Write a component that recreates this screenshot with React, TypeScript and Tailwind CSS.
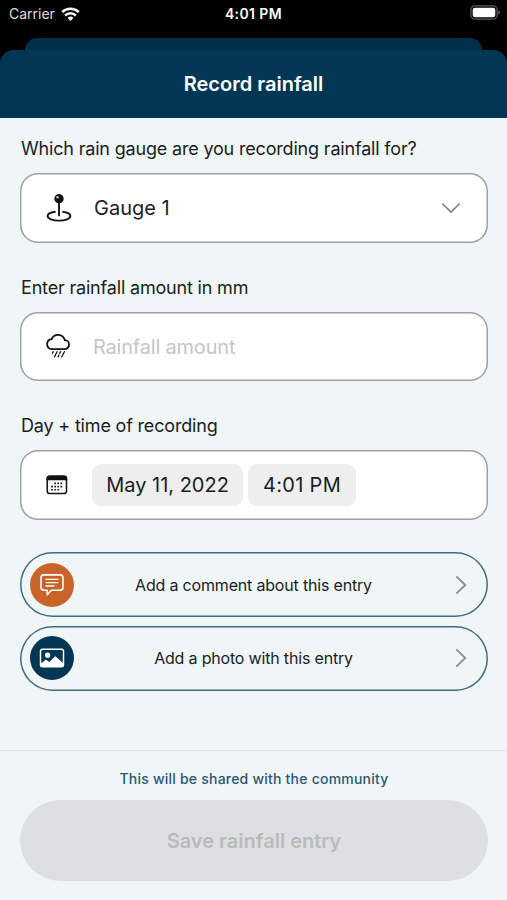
import type { ReactNode } from 'react';

const WifiIcon = () => (
  <svg className="w-[19px] h-[15px]" viewBox="0 0 19 15" fill="none" stroke="white" strokeWidth={2.5}>
    <path d="M1.2 5.1a11.8 11.8 0 0 1 16.6 0" />
    <path d="M4.1 8.5a7.6 7.6 0 0 1 10.8 0" />
    <path d="M9.5 14l-2.9-3a4.200 4.200 0 0 1 5.800 0z" fill="white" stroke="none" />
  </svg>
);

const BatteryIcon = () => (
  <svg className="w-[31px] h-[15px]" viewBox="0 0 31 15">
    <rect x="0.9" y="0.9" width="26.2" height="13.2" rx="4" fill="none" stroke="#5f5f5f" strokeWidth={1.2} />
    <rect x="2.7" y="2.7" width="22.6" height="9.6" rx="2.4" fill="white" />
    <path d="M28.3 5.2q1.8.8 1.8 2.3t-1.8 2.3z" fill="#5f5f5f" />
  </svg>
);

const PinIcon = () => (
  <svg className="w-[26px] h-[30px]" viewBox="0 0 26 30" fill="none" stroke="#111" strokeWidth={1.9}>
    <path d="M13 8v15.2" />
    <path d="M9.6 18.7C5 19.2 1.6 20.9 1.6 23c0 2.7 5.1 4.6 11.4 4.6S24.4 25.7 24.4 23c0-2.1-3.400-3.800-8-4.300" />
    <circle cx="13" cy="5.7" r="4.7" fill="#111" stroke="none" />
    <circle cx="11.5" cy="4.3" r="1.3" fill="#bbb" stroke="none" />
  </svg>
);

const RainIcon = () => (
  <svg className="w-[26px] h-[26px] -ml-px" viewBox="0 0 26 26" fill="none" stroke="#111" strokeWidth={1.8} strokeLinecap="round">
    <path d="M6.3 16.1h13a4.5 4.5 0 0 0 .5-9 7 7 0 0 0-13.2-.9 5 5 0 0 0-.3 9.9z" />
    <path d="M8.2 18.7l-.8 1.6M12 18.7l-2.5 5M15.6 18.7l-.8 1.6M13.9 22.1l-.8 1.6M19.4 18.7l-2.6 5" strokeWidth={1.3} />
  </svg>
);

const CalendarIcon = () => (
  <svg className="w-[22px] h-5" viewBox="0 0 22 20">
    <rect x="1.2" y="1.2" width="19.3" height="17.3" rx="2.6" fill="none" stroke="#111" strokeWidth={1.5} />
    <path d="M.5 5.3V3.5Q.5.5 3.5.5h14.7q3 0 3 3v1.8z" fill="#111" />
    <g fill="#222">
      <path d="M8.3 7.6H10v1.6H8.3zM11.4 7.6h1.7v1.6h-1.7zM14.5 7.6h1.7v1.6h-1.7z" />
      <path d="M5.2 10.8h1.7v1.6H5.2zM8.3 10.8H10v1.6H8.3zM11.4 10.8h1.7v1.6h-1.7zM14.5 10.8h1.7v1.6h-1.7z" />
      <path d="M5.2 14h1.7v1.6H5.2zM8.3 14H10v1.6H8.3zM11.4 14h1.7v1.6h-1.7z" />
    </g>
  </svg>
);

const CommentIcon = () => (
  <svg className="w-6 h-6" viewBox="0 0 24 24" fill="none" stroke="white" strokeWidth={1.6} strokeLinejoin="round">
    <path d="M4 1.900h16a3 3 0 0 1 3 3v9.300a3 3 0 0 1-3 3h-8.700L7.200 21.700v-4.500H4a3 3 0 0 1-3-3V4.900a3 3 0 0 1 3-3z" />
    <path d="M6 6.3h12M6 9.6h12M6 13h8" strokeWidth={1.3} strokeLinecap="round" />
  </svg>
);

const PhotoIcon = () => (
  <svg className="w-[26px] h-5" viewBox="0 0 26 20">
    <rect x="1.5" y="1.2" width="23" height="17.6" rx="2" fill="none" stroke="white" strokeWidth={1.5} />
    <circle cx="8.6" cy="7.2" r="2.6" fill="white" />
    <path d="M2 15.5l4.3-3.4q.7-.5 1.4 0l2.7 1.8 5-5.2q.8-.8 1.6 0l7 6.3v2.8q0 1-1 1H3q-1 0-1-1z" fill="white" />
  </svg>
);

const ChevronRight = () => (
  <svg className="w-3 h-5" viewBox="0 0 12 20" fill="none" stroke="#8b8d8e" strokeWidth={1.8}>
    <path d="M1.3 1.3L10.3 10l-9 8.7" />
  </svg>
);

const Field = ({ label, icon, children }: { label: string; icon: ReactNode; children: ReactNode }) => (
  <div className="mb-[33px]">
    <div className="h-6 leading-6 text-[18px] tracking-[-0.18px] pl-px mb-3 whitespace-nowrap">{label}</div>
    <div className="h-[69.5px] flex items-center rounded-[18px] shadow-[inset_0_0_0_1.5px_#a0a0a2] bg-white pr-[27px]">
      <div className="w-[72px] shrink-0 flex items-center pl-[26px]">{icon}</div>
      {children}
    </div>
  </div>
);

const EntryButton = ({ label, icon, color }: { label: string; icon: ReactNode; color: string }) => (
  <button className="h-[65px] w-full flex items-center rounded-full shadow-[inset_0_0_0_1.5px_#3f6c87] pl-[10px] pr-[21px]">
    <span className={`size-11 shrink-0 rounded-full flex items-center justify-center ${color}`}>{icon}</span>
    <span className="flex-1 text-center text-[16px] tracking-[-0.18px] pr-[22px]">{label}</span>
    <ChevronRight />
  </button>
);

const App = () => {
  return (
    <div className="w-full h-[900px] flex flex-col overflow-hidden bg-black font-['Inter',sans-serif] text-[#1b1d1e]">
      {/* Status bar */}
      <div className="h-[38px] shrink-0 grid grid-cols-3 items-start pt-[5px] pl-[9px] pr-[6px] text-[14px] leading-[18px]">
        <div className="flex items-center gap-[6px] text-[#dedede]">
          Carrier
          <WifiIcon />
        </div>
        <div className="text-center font-semibold tracking-[0.4px] pr-[3px] text-white">4:01 PM</div>
        <div className="flex justify-end">
          <BatteryIcon />
        </div>
      </div>

      {/* Sheet behind */}
      <div className="h-3 shrink-0 mx-[25px] rounded-t-[12px] bg-[#01314a]" />

      <div className="flex-1 flex flex-col">
        <div className="h-[68px] shrink-0 flex items-center justify-center rounded-t-[14px] bg-[#013754]">
          <h1 className="text-[20px] font-semibold text-white">Record rainfall</h1>
        </div>

        <div className="flex-1 flex flex-col bg-[#f0f5f6]">
          <div className="pl-5 pr-[19px] pt-[19px]">
            <Field label="Which rain gauge are you recording rainfall for?" icon={<PinIcon />}>
              <span className="flex-1 pl-[2px] pt-px text-[20px]">Gauge 1</span>
              <svg className="w-5 h-3" viewBox="0 0 20 12" fill="none" stroke="#858585" strokeWidth={1.7}>
                <path d="M1.3 1.5L10 10l8.7-8.5" />
              </svg>
            </Field>
            <Field label="Enter rainfall amount in mm" icon={<RainIcon />}>
              <span className="pl-px pt-px text-[20px] tracking-[-0.2px] text-[#c5c5c7]">Rainfall amount</span>
            </Field>
            <Field label="Day + time of recording" icon={<CalendarIcon />}>
              <div className="flex gap-[5px] text-[20px]">
                <span className="w-[151px] h-[42px] flex items-center justify-center rounded-[9px] bg-[#eeeeef]">May 11, 2022</span>
                <span className="w-[108px] h-[42px] flex items-center justify-center rounded-[9px] tracking-[0.3px] bg-[#eeeeef]">4:01 PM</span>
              </div>
            </Field>

            <div className="flex flex-col gap-[8.5px] -mt-[0.5px]">
              <EntryButton label="Add a comment about this entry" icon={<CommentIcon />} color="bg-[#ca632a]" />
              <EntryButton label="Add a photo with this entry" icon={<PhotoIcon />} color="bg-[#013754]" />
            </div>
          </div>

          {/* Footer */}
          <div className="mt-auto h-[150px] shrink-0 border-t border-[#e0e4e5] pl-5 pr-[19px] pt-[18px]">
            <p className="text-center text-[14px] leading-5 font-medium tracking-[0.22px] text-[#2b5873]">This will be shared with the community</p>
            <button className="mt-[11px] h-[81px] w-full rounded-full bg-[#dde0e1] text-[20px] font-semibold text-[#b9bbbd]">
              Save rainfall entry
            </button>
          </div>
        </div>
      </div>
    </div>
  );
};

export default App;
